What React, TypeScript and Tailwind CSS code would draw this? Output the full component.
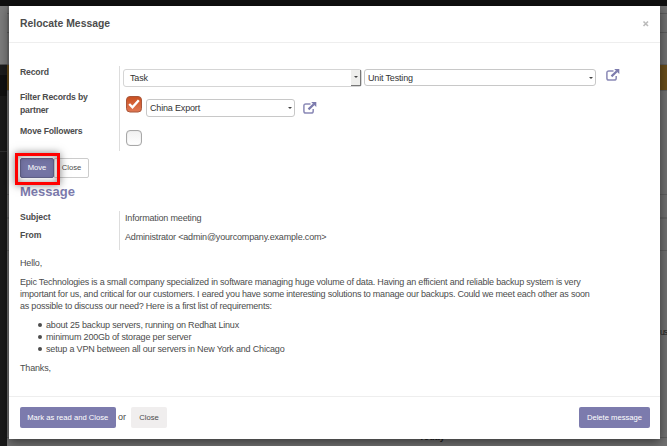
import React from 'react';

function ExternalLink() {
  return (
    <svg width="14" height="12" viewBox="0 0 14 12" fill="none" className="shrink-0">
      <path d="M7.500 2H2.800C1.600 2 .9 2.700.9 3.800V9.200C.9 10.300 1.600 11 2.800 11H8.200C9.400 11 10.200 10.300 10.200 9.200V7" stroke="#8a89b6" strokeWidth="1.500" />
      <path d="M5.500 7.400L10.800 2.200" stroke="#7c7bad" strokeWidth="2.200" />
      <path d="M8.200.1H13.300V5Z" fill="#7c7bad" />
    </svg>
  );
}

function Caret() {
  return <span className="h-0 w-0 border-x-[2px] border-t-[2px] border-x-transparent border-t-[#444]" />;
}

function Combo({ value, className }: { value: string; className: string }) {
  return (
    <div className={`flex items-center justify-between rounded-[3px] border border-[#c8c8c8] bg-white pr-[2px] pl-[3px] text-[#333] ${className}`}>
      <span>{value}</span>
      <Caret />
    </div>
  );
}

function Backdrop() {
  return (
    <div className="flex h-[446px] w-[667px] flex-col bg-[#717171]">
      <div className="h-[6px] bg-[#101010]" />
      <div className="flex flex-1">
        <div className="flex w-[7px] flex-col">
          <div className="h-[58px] bg-[#7c7c7c]" />
          <div className="h-px bg-[#505050]" />
          <div className="h-[10px] bg-[#1c1c1c]" />
          <div className="h-[21px] bg-[#101010]" />
          <div className="h-[55px] bg-[#191919]" />
          <div className="h-px bg-[#303030]" />
          <div className="flex-1 bg-[#191919]" />
        </div>
        <div className="flex flex-1 flex-col">
          <div className="h-[7px]" />
          <div className="h-px bg-[#5c5c5c]" />
          <div className="h-[18px]" />
          <div className="h-px bg-[#5c5c5c]" />
          <div className="h-[31px]" />
          <div className="h-px bg-[#5f5f5f]" />
          <div className="h-[25px] bg-[#694d1a]" />
          <div className="h-px bg-[#5f5f5f]" />
          <div className="h-[103px]" />
          <div className="h-px bg-[#606060]" />
          <div className="h-[22px]" />
          <div className="h-[2px] bg-[#646464]" />
          <div className="h-[31px]" />
          <div className="h-px bg-[#606060]" />
          <div className="flex h-[186px] items-start justify-end pt-[75px] text-[8.67px] leading-[12px] text-[#222]">
            <span className="w-[7px] tracking-[-1px]">us</span>
          </div>
          <div className="h-px bg-[#5f5f5f]" />
          <div className="-mt-[6px] pl-[412px] text-[9px] leading-[11px] font-bold text-[#222]">Today</div>
        </div>
      </div>
    </div>
  );
}

function Form() {
  return (
    <div className="flex">
      <div className="w-[99px] text-[8.67px] leading-[13px] font-bold tracking-[-0.18px]">
        <div className="h-[25px]">Record</div>
        <div className="h-[34px]">Filter Records by<br />partner</div>
        <div>Move Followers</div>
      </div>
      <div className="flex h-[85px] flex-col border-l border-[#ddd] pl-[3px]">
        <div className="flex items-start pt-[3px]">
          <div className="flex h-[18px] w-[239px] items-center justify-between rounded-[3px] border border-[#d5d5d5] pb-px pl-[6px] text-[#333]">
            <span>Task</span>
            <div className="flex h-[16px] w-[10px] items-center justify-center border-r border-b border-[#777] bg-[#eeeeec]"><Caret /></div>
          </div>
          <Combo value="Unit Testing" className="ml-[2px] h-[17px] w-[232px]" />
          <div className="ml-[10px]"><ExternalLink /></div>
        </div>
        <div className="mt-[9px] flex items-start pl-[3px]">
          <svg width="16" height="17" viewBox="0 0 16 17" className="shrink-0">
            <defs>
              <linearGradient id="tick" x1="0" y1="0" x2="0" y2="1">
                <stop offset="0" stopColor="#c94f20" />
                <stop offset="1" stopColor="#e17854" />
              </linearGradient>
            </defs>
            <rect x=".5" y=".5" width="15" height="15.500" rx="3.500" fill="url(#tick)" stroke="#a8563a" />
            <path d="M3.200 8L6.500 11.300L12.800 4.300" fill="none" stroke="#fff" strokeWidth="2.400" />
          </svg>
          <Combo value="China Export" className="mt-[3px] ml-[4px] h-[18px] w-[149px]" />
          <div className="mt-[6px] ml-[8px]"><ExternalLink /></div>
        </div>
        <div className="mt-[13px] ml-[3px] h-[16px] w-[16px] rounded-[4px] border border-[#a8a8a8] bg-linear-to-b from-[#f1f1f1] to-white shadow-[inset_0_0_1px_#bbb]" />
      </div>
    </div>
  );
}

export default function App() {
  return (
    <div className="relative h-[446px] w-[667px] overflow-hidden font-['Liberation_Sans',Arial,sans-serif]">
      <Backdrop />
      <div className="absolute top-[6px] left-[9px] flex h-[433px] w-[651px] flex-col bg-white text-[9px] leading-[12px] tracking-[-0.17px] whitespace-nowrap text-[#4c4c4c] shadow-[0_3px_10px_rgba(0,0,0,0.5)]">
        <header className="flex h-[37px] items-center justify-between border-b border-[#eee] pr-[11px] pl-[11px]">
          <h1 className="text-[10.4px] font-bold tracking-normal">Relocate Message</h1>
          <svg width="7" height="7" viewBox="0 0 7 7" className="mb-[2px]"><path d="M1.500 1.500L6 6M6 1.500L1.500 6" stroke="#bbb" strokeWidth="1.600" /></svg>
        </header>
        <main className="h-[353px] px-[11px] pt-[23px]">
          <Form />
          <div className="mt-[7px] flex h-[20px] text-[7.65px] tracking-normal">
            <button className="w-[34px] rounded-[2px] border border-[#63638c] bg-[#7474a4] text-white">Move</button>
            <button className="w-[35px] rounded-r-[2px] border border-[#ccc] bg-white">Close</button>
          </div>
          <h2 className="mt-[6px] text-[13px] leading-[16px] font-bold tracking-normal text-[#7c7bad]">Message</h2>
          <div className="mt-[11px] flex h-[39px]">
            <div className="w-[99px] text-[8.67px] font-bold tracking-[-0.1px]">
              <div className="h-[18px]">Subject</div>
              <div>From</div>
            </div>
            <div className="border-l border-[#ddd] pt-px pl-[5px]">
              <div className="h-[19px]">Information meeting</div>
              <div>Administrator &lt;admin@yourcompany.example.com&gt;</div>
            </div>
          </div>
          <div className="mt-[7px]">
            <p>Hello,</p>
            <p className="mt-[7px] tracking-[-0.22px]">
              <span className="tracking-[-0.2px]">Epic Technologies is a small company specialized in software managing huge volume of data. Having an efficient and reliable backup system is very</span><br />
              important for us, and critical for our customers. I eared you have some interesting solutions to manage our backups. Could we meet each other as soon<br />
              as possible to discuss our need? Here is a first list of requirements:
            </p>
            <ul className="mt-[7px] tracking-[-0.18px]">
              {['about 25 backup servers, running on Redhat Linux', 'minimum 200Gb of storage per server', 'setup a VPN between all our servers in New York and Chicago'].map((item) => (
                <li key={item} className="flex items-center pl-[18px]">
                  <span className="mr-[4px] h-[4px] w-[4px] rounded-full bg-[#4c4c4c]" />
                  {item}
                </li>
              ))}
            </ul>
            <p className="mt-[7px]">Thanks,</p>
          </div>
        </main>
        <footer className="flex flex-1 items-start border-t border-[#eee] pr-[10px] pl-[10.5px] pt-[10px] text-[7.65px] tracking-normal">
          <button className="h-[21px] w-[96.5px] rounded-[2px] bg-[#7c7bad] text-white">Mark as read and Close</button>
          <span className="w-[15px] pt-[4px] pl-[2px] text-[9px]">or</span>
          <button className="h-[21px] w-[36px] rounded-[2px] bg-[#f0eeee]">Close</button>
          <button className="ml-auto h-[21px] w-[71px] rounded-[2px] bg-[#7c7bad] text-white">Delete message</button>
        </footer>
      </div>
      <div className="absolute top-[153px] left-[15px] h-[32px] w-[45px] border-[3px] border-[#f00] shadow-[0_0_8px_rgba(0,0,0,0.5),inset_0_0_7px_rgba(0,0,0,0.4)]" />
    </div>
  );
}
